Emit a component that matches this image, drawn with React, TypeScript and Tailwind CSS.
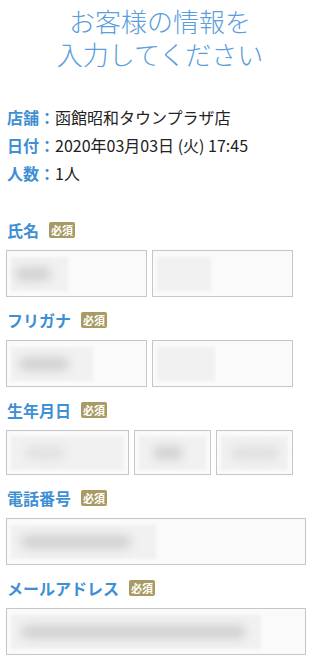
import React from "react";

const font = { fontFamily: '"Noto Sans CJK JP", "Noto Sans", sans-serif' };

function Badge() {
  return (
    <span className="ml-[10px] inline-flex h-[16px] w-[26px] items-center justify-center rounded-[2px] bg-[#a89a62] text-[11px] font-bold leading-none text-white">
      必須
    </span>
  );
}

function Label({ children }: { children: React.ReactNode }) {
  return (
    <div className="mt-[11px] mb-[8px] flex h-[24px] items-center pl-[1px]">
      <span className="text-[16px] font-bold text-[#3f8fd4]">{children}</span>
      <Badge />
    </div>
  );
}

// blurred placeholder content inside an input
function Field({
  className,
  box,
  blob,
  h = "h-[47px]",
}: {
  className: string;
  box: string;
  blob: string;
  h?: string;
}) {
  return (
    <div className={`${className} ${h} flex items-center border border-[#c6c6c6] bg-[#fafafa] px-[4px]`}>
      <div className={`${box} flex h-[34px] items-center bg-[#f1f1f1] blur-[1px]`}>
        <div className={`${blob} h-[14px] rounded-full bg-[#d2d2d2] blur-[5px]`} />
      </div>
    </div>
  );
}

export default function App() {
  return (
    <div className="min-h-[660px] w-[320px] bg-white text-[#222]" style={font}>
      <h1 className="pt-[4px] text-center text-[26px] font-light text-[#5a9edc]">
        <div className="h-[33px] leading-[33px]">お客様の情報を</div>
        <div className="h-[33px] leading-[33px]">入力してください</div>
      </h1>

      <div className="mt-[33px] px-[7px] text-[16px] leading-[28px]">
        <div>
          <span className="font-bold text-[#3f8fd4]">店舗：</span>函館昭和タウンプラザ店
        </div>
        <div>
          <span className="font-bold text-[#3f8fd4]">日付：</span>2020年03月03日 (火) 17:45
        </div>
        <div>
          <span className="font-bold text-[#3f8fd4]">人数：</span>1人
        </div>
      </div>

      <div className="mt-[31px] w-[300px] pl-[6px]">
        <Label>氏名</Label>
        <div className="flex w-[287px] gap-[5px]">
          <Field className="w-[141px]" box="w-[57px] pl-[4px]" blob="w-[36px]" />
          <Field className="w-[141px]" box="w-[54px]" blob="w-0" />
        </div>

        <Label>フリガナ</Label>
        <div className="flex w-[287px] gap-[5px]">
          <Field className="w-[141px]" box="w-[82px] pl-[8px]" blob="w-[50px]" />
          <Field className="w-[141px]" box="w-[58px]" blob="w-0" />
        </div>

        <Label>生年月日</Label>
        <div className="flex w-[287px] gap-[5px]">
          <Field className="w-[123px]" h="h-[45px]" box="w-[114px] pl-[14px]" blob="w-[40px] bg-[#e2e2e2]" />
          <Field className="w-[77px]" h="h-[45px]" box="w-[68px] pl-[14px]" blob="w-[30px]" />
          <Field className="w-[77px]" h="h-[45px]" box="w-[68px] pl-[10px]" blob="w-[48px] bg-[#e0e0e0]" />
        </div>

        <Label>電話番号</Label>
        <Field className="w-[300px]" box="w-[145px] pl-[10px]" blob="w-[110px]" />

        <Label>メールアドレス</Label>
        <Field className="w-[300px]" box="w-[250px] pl-[10px]" blob="w-[225px]" />
      </div>
    </div>
  );
}
